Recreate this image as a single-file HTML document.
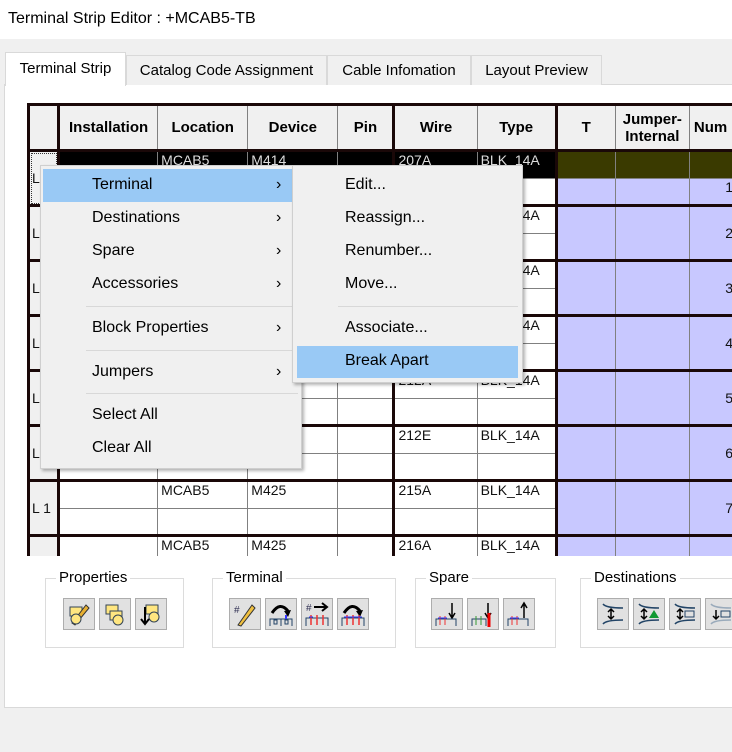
<!DOCTYPE html>
<html><head><meta charset="utf-8"><style>
*{margin:0;padding:0;box-sizing:border-box}
body{width:732px;height:752px;background:#f0f0f0;font-family:"Liberation Sans",Arial,sans-serif;position:relative;overflow:hidden}
.abs{position:absolute}
#title{left:0;top:0;width:732px;height:40px;background:#fff;font-size:16px;line-height:40px;padding-left:8px;color:#000;top:-1px}
.tab{position:absolute;top:55px;height:30px;border:1px solid #d9d9d9;border-bottom:none;background:#f0f0f0;font-size:15px;line-height:30px;text-align:center;color:#000}
#panel{left:4px;top:84px;width:740px;height:624px;background:#fff;border:1px solid #d9d9d9}
#grid{left:27px;top:103px;width:705px;height:453px;overflow:hidden;background:#fff}
table{border-collapse:collapse;table-layout:fixed;font-size:14px}
td{border:1px solid #808080;height:27px;padding:0 3px;vertical-align:top;line-height:17px;white-space:nowrap;overflow:hidden;color:#111}
tr.f td{height:28px}
th{border:1px solid #808080;border-top:3px solid #1a0808;height:46px;background:#f0f0f0;font-weight:bold;font-size:15px;line-height:17px}
tr.f td{border-top:3px solid #1a0808}
.rh{background:#f0f0f0;vertical-align:middle;font-size:14px;padding-left:2px}
.tk{border-right:3px solid #1a0808!important}
.bl{background:#c8c8ff;vertical-align:middle;text-align:right;padding-right:4px}
.sel td.s{background:#000;color:#ddd}
.ol{background:#3a3a00!important}
.m{position:absolute;font-size:16px;line-height:20px;color:#000}
.hl{position:absolute;background:#99c9f5}
.sep{position:absolute;height:1px;background:#d8d8d8}
.gb{position:absolute;top:578px;height:70px;border:1px solid #dcdcdc}
.gl{position:absolute;top:-10px;left:10px;background:#fff;padding:0 3px;font-size:15px;line-height:18px;color:#000}
.btn{position:absolute;top:598px;width:32px;height:32px;background:#e1e1e1;border:1px solid #adadad}
.btn svg{width:30px;height:30px}
</style></head><body>
<div id="title" class="abs">Terminal Strip Editor : +MCAB5-TB</div>
<div id="panel" class="abs"></div>
<div class="tab" style="left:5px;top:52px;width:121px;height:34px;background:#fff;line-height:32px;z-index:2">Terminal Strip</div>
<div class="tab" style="left:126px;width:201px">Catalog Code Assignment</div>
<div class="tab" style="left:327px;width:144px">Cable Infomation</div>
<div class="tab" style="left:471px;width:131px">Layout Preview</div>

<div id="grid" class="abs">
<table style="width:711px;border-left:3px solid #1a0808">
<colgroup><col style="width:30px"><col style="width:99px"><col style="width:90px"><col style="width:90px"><col style="width:56px"><col style="width:83px"><col style="width:79px"><col style="width:59px"><col style="width:74px"><col style="width:48px"></colgroup>
<tr><th class="tk"></th><th>Installation</th><th>Location</th><th>Device</th><th class="tk">Pin</th><th>Wire</th><th class="tk">Type</th><th>T</th><th>Jumper-<br>Internal</th><th style="text-align:left;padding-left:4px">Num</th></tr>
<tr class="f sel"><td class="rh tk" rowspan="2" style="outline:1px dotted #333;outline-offset:-3px">L 1</td><td class="s"></td><td class="s">MCAB5</td><td class="s">M414</td><td class="s tk"></td><td class="s">207A</td><td class="s tk">BLK_14A</td><td class="ol"></td><td class="ol"></td><td class="ol"></td></tr>
<tr><td></td><td></td><td></td><td class="tk"></td><td></td><td class="tk"></td><td class="bl"></td><td class="bl"></td><td class="bl" style="vertical-align:top">1</td></tr>
<tr class="f"><td class="rh tk" rowspan="2">L 1</td><td></td><td>MCAB5</td><td>M414</td><td class="tk"></td><td>207B</td><td class="tk">BLK_14A</td><td class="bl" rowspan="2"></td><td class="bl" rowspan="2"></td><td class="bl" rowspan="2">2</td></tr>
<tr><td></td><td></td><td></td><td class="tk"></td><td></td><td class="tk"></td></tr>
<tr class="f"><td class="rh tk" rowspan="2">L 1</td><td></td><td>MCAB5</td><td>M414</td><td class="tk"></td><td>208A</td><td class="tk">BLK_14A</td><td class="bl" rowspan="2"></td><td class="bl" rowspan="2"></td><td class="bl" rowspan="2">3</td></tr>
<tr><td></td><td></td><td></td><td class="tk"></td><td></td><td class="tk"></td></tr>
<tr class="f"><td class="rh tk" rowspan="2">L 1</td><td></td><td>MCAB5</td><td>M414</td><td class="tk"></td><td>210A</td><td class="tk">BLK_14A</td><td class="bl" rowspan="2"></td><td class="bl" rowspan="2"></td><td class="bl" rowspan="2">4</td></tr>
<tr><td></td><td></td><td></td><td class="tk"></td><td></td><td class="tk"></td></tr>
<tr class="f"><td class="rh tk" rowspan="2">L 1</td><td></td><td>MCAB5</td><td>M425</td><td class="tk"></td><td>212A</td><td class="tk">BLK_14A</td><td class="bl" rowspan="2"></td><td class="bl" rowspan="2"></td><td class="bl" rowspan="2">5</td></tr>
<tr><td></td><td></td><td></td><td class="tk"></td><td></td><td class="tk"></td></tr>
<tr class="f"><td class="rh tk" rowspan="2">L 1</td><td></td><td>MCAB5</td><td>M425</td><td class="tk"></td><td>212E</td><td class="tk">BLK_14A</td><td class="bl" rowspan="2"></td><td class="bl" rowspan="2"></td><td class="bl" rowspan="2">6</td></tr>
<tr><td></td><td></td><td></td><td class="tk"></td><td></td><td class="tk"></td></tr>
<tr class="f"><td class="rh tk" rowspan="2">L 1</td><td></td><td>MCAB5</td><td>M425</td><td class="tk"></td><td>215A</td><td class="tk">BLK_14A</td><td class="bl" rowspan="2"></td><td class="bl" rowspan="2"></td><td class="bl" rowspan="2">7</td></tr>
<tr><td></td><td></td><td></td><td class="tk"></td><td></td><td class="tk"></td></tr>
<tr class="f"><td class="rh tk" rowspan="2">L 1</td><td></td><td>MCAB5</td><td>M425</td><td class="tk"></td><td>216A</td><td class="tk">BLK_14A</td><td class="bl" rowspan="2"></td><td class="bl" rowspan="2"></td><td class="bl" rowspan="2">8</td></tr>
<tr><td></td><td></td><td></td><td class="tk"></td><td></td><td class="tk"></td></tr>
</table>
</div>

<div class="abs" style="left:40px;top:165px;width:262px;height:304px;background:#f0f0f0;border:1px solid #cfcfcf;box-shadow:2px 2px 3px rgba(0,0,0,.3)"></div>
<div class="hl" style="left:43px;top:169px;width:249px;height:33px"></div>
<div class="m" style="left:92px;top:175px">Terminal</div><div class="m" style="left:276px;top:175px">›</div>
<div class="m" style="left:92px;top:208px">Destinations</div><div class="m" style="left:276px;top:208px">›</div>
<div class="m" style="left:92px;top:241px">Spare</div><div class="m" style="left:276px;top:241px">›</div>
<div class="m" style="left:92px;top:274px">Accessories</div><div class="m" style="left:276px;top:274px">›</div>
<div class="sep" style="left:86px;top:306px;width:206px"></div>
<div class="m" style="left:92px;top:318px">Block Properties</div><div class="m" style="left:276px;top:318px">›</div>
<div class="sep" style="left:86px;top:350px;width:206px"></div>
<div class="m" style="left:92px;top:362px">Jumpers</div><div class="m" style="left:276px;top:362px">›</div>
<div class="sep" style="left:86px;top:393px;width:212px"></div>
<div class="m" style="left:92px;top:405px">Select All</div>
<div class="m" style="left:92px;top:438px">Clear All</div>

<div class="abs" style="left:292px;top:165px;width:231px;height:218px;background:#f0f0f0;border:1px solid #cfcfcf;box-shadow:2px 2px 3px rgba(0,0,0,.3)"></div>
<div class="m" style="left:345px;top:175px">Edit...</div>
<div class="m" style="left:345px;top:208px">Reassign...</div>
<div class="m" style="left:345px;top:241px">Renumber...</div>
<div class="m" style="left:345px;top:274px">Move...</div>
<div class="sep" style="left:338px;top:306px;width:180px"></div>
<div class="m" style="left:345px;top:318px">Associate...</div>
<div class="hl" style="left:297px;top:346px;width:221px;height:32px"></div>
<div class="m" style="left:345px;top:351px">Break Apart</div>

<div class="gb" style="left:45px;width:139px"><div class="gl">Properties</div></div>
<div class="gb" style="left:212px;width:184px"><div class="gl">Terminal</div></div>
<div class="gb" style="left:415px;width:141px"><div class="gl">Spare</div></div>
<div class="gb" style="left:580px;width:160px"><div class="gl">Destinations</div></div>

<div class="btn" style="left:63px"><svg viewBox="0 0 30 30"><rect x="6" y="8" width="12" height="9" fill="#ffe680" stroke="#345" /><path d="M8 24 L22 6 L25 9 L11 26Z" fill="#e8b030" stroke="#333"/><circle cx="12" cy="20" r="5" fill="#ffe680" stroke="#345"/></svg></div>
<div class="btn" style="left:99px"><svg viewBox="0 0 30 30"><rect x="6" y="6" width="12" height="9" fill="#ffe680" stroke="#345"/><rect x="10" y="12" width="12" height="9" fill="#ffe680" stroke="#345"/><circle cx="18" cy="21" r="5" fill="#ffe680" stroke="#345"/></svg></div>
<div class="btn" style="left:135px"><svg viewBox="0 0 30 30"><rect x="10" y="6" width="12" height="9" fill="#ffe680" stroke="#345"/><circle cx="18" cy="18" r="5" fill="#ffe680" stroke="#345"/><path d="M9 8 V24 M5 20 L9 25 L13 20" stroke="#000" stroke-width="2" fill="none"/></svg></div>

<div class="btn" style="left:229px"><svg viewBox="0 0 30 30"><text x="4" y="14" font-size="10" fill="#335">#</text><path d="M8 26 L22 6 L25 9 L11 27Z" fill="#f0c040" stroke="#333"/></svg></div>
<div class="btn" style="left:265px"><svg viewBox="0 0 30 30"><path d="M6 14 Q14 2 22 12" stroke="#000" stroke-width="3" fill="none"/><path d="M18 12 L25 11 L22 18Z" fill="#000"/><path d="M4 27 V20 H26 V27 M15 20 V27" stroke="#246" fill="none"/><rect x="8" y="21" width="3" height="4" fill="none" stroke="#246"/><rect x="19" y="21" width="3" height="4" fill="none" stroke="#246"/><path d="M20 16 V20" stroke="#33f" stroke-width="2"/></svg></div>
<div class="btn" style="left:301px"><svg viewBox="0 0 30 30"><text x="4" y="12" font-size="10" fill="#335">#</text><path d="M12 8 H24 M20 4 L25 8 L20 12" stroke="#000" stroke-width="2" fill="none"/><path d="M4 27 V19 H26 V27" stroke="#246" fill="none"/><path d="M9 16 V26 M15 16 V26 M21 16 V26" stroke="#e33" stroke-width="1.5"/><path d="M7 18 H11" stroke="#33f"/></svg></div>
<div class="btn" style="left:337px"><svg viewBox="0 0 30 30"><path d="M6 14 Q14 2 22 12" stroke="#000" stroke-width="3" fill="none"/><path d="M18 12 L25 11 L22 18Z" fill="#000"/><path d="M4 27 V19 H26 V27" stroke="#246" fill="none"/><path d="M9 16 V26 M15 16 V26 M21 16 V26" stroke="#e33" stroke-width="1.5"/><path d="M6 18 H24" stroke="#33f"/></svg></div>

<div class="btn" style="left:431px"><svg viewBox="0 0 30 30"><path d="M20 4 V18 M17 14 L20 19 L23 14" stroke="#000" stroke-width="1.5" fill="none"/><path d="M4 27 V20 H24 V27" stroke="#246" fill="none"/><path d="M8 17 V26 M13 17 V26" stroke="#e33"/><path d="M6 19 H15" stroke="#33f"/></svg></div>
<div class="btn" style="left:467px"><svg viewBox="0 0 30 30"><path d="M20 4 V18 M17 14 L20 19 L23 14" stroke="#000" stroke-width="1.5" fill="none"/><path d="M4 27 V20 H18 V27" stroke="#246" fill="none"/><path d="M8 17 V26 M13 17 V26" stroke="#393"/><path d="M21 14 V28" stroke="#e00" stroke-width="3"/></svg></div>
<div class="btn" style="left:503px"><svg viewBox="0 0 30 30"><path d="M20 19 V5 M17 9 L20 4 L23 9" stroke="#000" stroke-width="1.5" fill="none"/><path d="M4 27 V20 H24 V27" stroke="#246" fill="none"/><path d="M8 17 V26 M13 17 V26" stroke="#e33"/><path d="M6 19 H15" stroke="#33f"/></svg></div>

<div class="btn" style="left:597px"><svg viewBox="0 0 30 30"><path d="M5 5 Q8 9 25 9 M5 25 Q8 21 25 21" stroke="#246" stroke-width="1.5" fill="none"/><path d="M13 11 V19 M10 13 L13 10 L16 13 M10 17 L13 20 L16 17" stroke="#000" stroke-width="1.5" fill="none"/></svg></div>
<div class="btn" style="left:633px"><svg viewBox="0 0 30 30"><path d="M5 5 Q8 9 25 9 M5 25 Q8 21 25 21" stroke="#246" stroke-width="1.5" fill="none"/><path d="M10 11 V19 M7 13 L10 10 L13 13 M7 17 L10 20 L13 17" stroke="#000" stroke-width="1.5" fill="none"/><path d="M15 19 L20 11 L25 19Z" fill="#193"/></svg></div>
<div class="btn" style="left:669px"><svg viewBox="0 0 30 30"><path d="M5 5 Q8 9 25 9 M5 25 Q8 21 25 21" stroke="#246" stroke-width="1.5" fill="none"/><path d="M10 11 V19 M7 13 L10 10 L13 13 M7 17 L10 20 L13 17" stroke="#000" stroke-width="1.5" fill="none"/><rect x="15" y="12" width="9" height="6" fill="none" stroke="#246"/></svg></div>
<div class="btn" style="left:705px"><svg viewBox="0 0 30 30"><path d="M5 5 Q8 9 25 9 M5 25 Q8 21 25 21" stroke="#9ab" stroke-width="1.5" fill="none"/><path d="M10 11 V19 M7 17 L10 20 L13 17" stroke="#000" stroke-width="1.5" fill="none"/><rect x="15" y="12" width="9" height="6" fill="none" stroke="#246"/></svg></div>
</body></html>
